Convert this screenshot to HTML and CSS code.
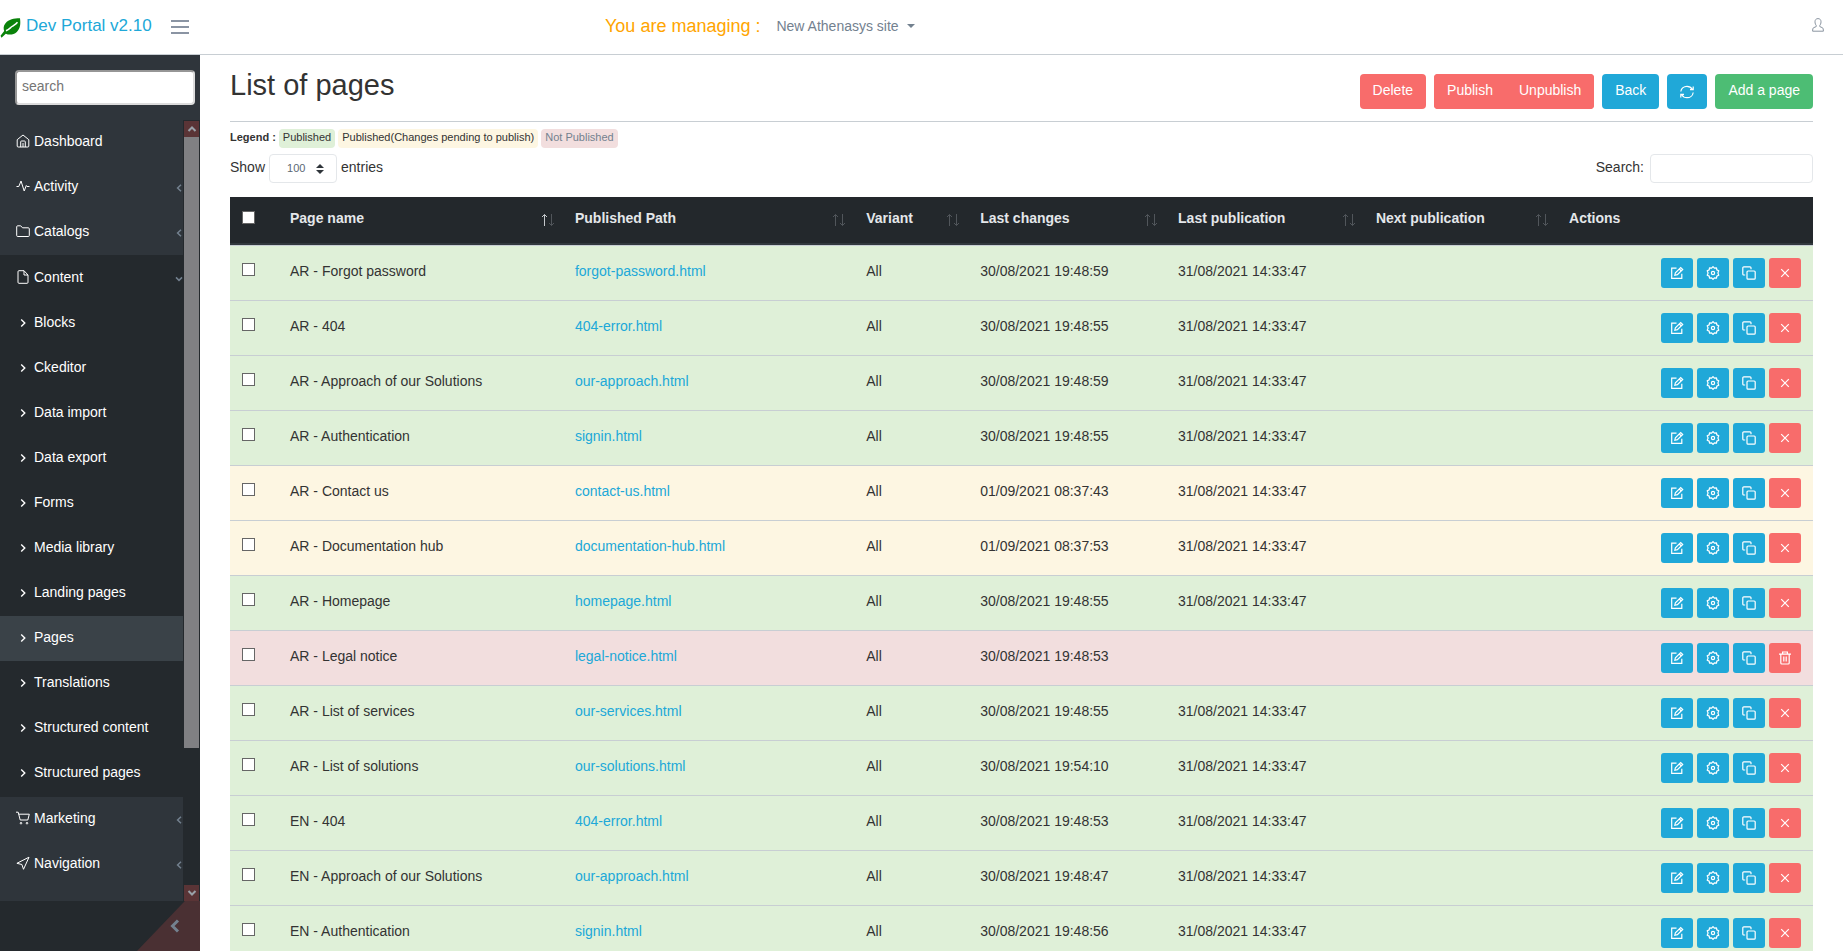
FILE: index.html
```html
<!DOCTYPE html>
<html lang="en">
<head>
<meta charset="utf-8">
<title>Dev Portal - List of pages</title>
<link rel="stylesheet" href="styles.css">
</head>
<body>
<svg class="sprite" aria-hidden="true">
  <symbol id="edit" viewBox="0 0 14 14"><path d="M6.5 2.200H1.700v10.100h10.100V7.800M4.800 9.300l.6-2.600 5.300-5.200 2 2-5.300 5.200zM9.300 3l2 2"/></symbol>
  <symbol id="gear" viewBox="0 0 14 14"><path d="M5.600 2.200 7 .6l1.400 1.600 2.100-.4.300 2.100 2 .9L11.900 7l.9 2.200-2 .9-.3 2.100-2.100-.4L7 13.400l-1.400-1.600-2.100.4-.3-2.100-2-.9L2.100 7l-.9-2.200 2-.9.300-2.100z" stroke-linejoin="round"/><circle cx="7" cy="7" r="1.600"/></symbol>
  <symbol id="copy" viewBox="0 0 14 14"><rect x="5" y="5" width="8.200" height="8.200" rx="1"/><path d="M3.200 9H1.800a1 1 0 0 1-1-1V1.800a1 1 0 0 1 1-1H8a1 1 0 0 1 1 1v1.400"/></symbol>
  <symbol id="cross" viewBox="0 0 14 14"><path d="m3.200 3.200 7.600 7.600m0-7.600-7.600 7.600"/></symbol>
  <symbol id="trash" viewBox="0 0 14 14"><path d="M1 3.200h12M4.600 3V1h4.800v2M2.800 3.400v8.600q0 1 1 1h6.400q1 0 1-1V3.400M5.800 5.500v5M8.200 5.500v5"/></symbol>
  <symbol id="left" viewBox="0 0 8 10"><path d="M6 1.800 2.600 5 6 8.200"/></symbol>
  <symbol id="right" viewBox="0 0 8 10"><path d="M2.200 1.400 5.800 5 2.200 8.600"/></symbol>
  <symbol id="down" viewBox="0 0 8 8"><path d="M1 2.400 4 5.400l3-3"/></symbol>
  <symbol id="sort" viewBox="0 0 14 14"><path class="up" d="M3.500 13V1.500M1 4l2.500-2.500L6 4"/><path class="dn" d="M10.500 1v11.500M8 10l2.500 2.500L13 10"/></symbol>
</svg>

<header class="topbar">
  <a class="brand" href="#">
    <svg class="leaf" viewBox="0 0 20 20"><path d="M19.500.3C13 .5 8.500 1.300 5 5.200 2.700 8 2.900 10.700 3.700 13L0 17.800l1 1.900 4.300-4c3.200 1.500 7.800 1.200 11-1.700C20 10.500 20.200 5.500 19.500.3z" fill="#0a820a"/><path d="M5.500 12.700c3-1.200 4-2.700 6-4.200s3.500-2 5.500-4.300" fill="none" stroke="#fff" stroke-width="1.500"/></svg>
    <span>Dev Portal v2.10</span>
  </a>
  <button class="burger" aria-label="Toggle menu"><span></span><span></span><span></span></button>
  <div class="site">
    <span class="managing">You are managing :</span>
    <button class="site-pick">New Athenasys site <span class="caret"></span></button>
  </div>
  <button class="user" aria-label="Account"><svg viewBox="0 0 12 14"><path d="M6 .6c2 0 3 1.300 3 3.200 0 1.700-.6 2.900-1.200 3.600v1.200l2.800 1.200q.8.500.8 3.400H.6q0-2.900.8-3.400l2.800-1.200V7.400C3.600 6.700 3 5.500 3 3.800 3 1.900 4 .6 6 .6z"/></svg></button>
</header>

<div class="shell">
  <aside class="sidebar">
    <div class="side-search"><input type="text" placeholder="search" aria-label="Search menu"></div>
    <div class="side-body">
      <nav class="menu">
        <a class="item" href="#"><svg class="ico" viewBox="0 0 14 14"><path d="M1.200 5.700 7 1l5.800 4.700V12q0 1-1 1H2.200q-1 0-1-1zM4.700 13V7.800q0-.8.800-.8h3q.8 0 .8.800V13M7 13V9"/></svg>Dashboard</a>
        <a class="item" href="#"><svg class="ico" viewBox="0 0 14 14"><path d="M.5 7.500h2.300L5 2l3.200 10 2.100-5.500.7 1h2.500"/></svg>Activity<svg class="arrow"><use href="#left"/></svg></a>
        <a class="item" href="#"><svg class="ico" viewBox="0 0 14 14"><path d="M.7 2.800q0-1 1-1h3l1.800 2h5.800q1 0 1 1v6.700q0 1-1 1H1.700q-1 0-1-1z"/></svg>Catalogs<svg class="arrow"><use href="#left"/></svg></a>
        <div class="open">
          <a class="item" href="#"><svg class="ico" viewBox="0 0 14 14"><path d="M2 1.700q0-1 1-1h5L12 5v7.300q0 1-1 1H3q-1 0-1-1zM8 .8V5h4"/></svg>Content<svg class="arrow"><use href="#down"/></svg></a>
          <a class="item" href="#"><svg class="ico sub"><use href="#right"/></svg>Blocks</a>
          <a class="item" href="#"><svg class="ico sub"><use href="#right"/></svg>Ckeditor</a>
          <a class="item" href="#"><svg class="ico sub"><use href="#right"/></svg>Data import</a>
          <a class="item" href="#"><svg class="ico sub"><use href="#right"/></svg>Data export</a>
          <a class="item" href="#"><svg class="ico sub"><use href="#right"/></svg>Forms</a>
          <a class="item" href="#"><svg class="ico sub"><use href="#right"/></svg>Media library</a>
          <a class="item" href="#"><svg class="ico sub"><use href="#right"/></svg>Landing pages</a>
          <a class="item active" href="#"><svg class="ico sub"><use href="#right"/></svg>Pages</a>
          <a class="item" href="#"><svg class="ico sub"><use href="#right"/></svg>Translations</a>
          <a class="item" href="#"><svg class="ico sub"><use href="#right"/></svg>Structured content</a>
          <a class="item" href="#"><svg class="ico sub"><use href="#right"/></svg>Structured pages</a>
        </div>
        <a class="item" href="#"><svg class="ico" viewBox="0 0 14 14"><path d="M0 1.200h2.200l2 7.800h7.600l1.500-5.800H2.800"/><circle cx="5" cy="12.200" r=".8"/><circle cx="11" cy="12.200" r=".8"/></svg>Marketing<svg class="arrow"><use href="#left"/></svg></a>
        <a class="item" href="#"><svg class="ico" viewBox="0 0 14 14"><path d="M13 1.200.9 7.300l5 1.200 1.600 4.800z"/></svg>Navigation<svg class="arrow"><use href="#left"/></svg></a>
      </nav>
      <div class="scroll">
        <span class="scroll-btn"><svg viewBox="0 0 10 8"><path d="M1.500 6 5 2.500 8.500 6"/></svg></span>
        <span class="thumb"></span>
        <span class="scroll-btn"><svg viewBox="0 0 10 8"><path d="M1.500 2 5 5.500 8.500 2"/></svg></span>
      </div>
    </div>
    <button class="minimizer" aria-label="Collapse sidebar"><svg viewBox="0 0 10 14"><path d="M8 1.500 2.500 7 8 12.500"/></svg></button>
  </aside>

  <main class="main">
    <div class="title-row">
      <h1>List of pages</h1>
      <div class="tools">
        <button class="btn red">Delete</button>
        <div class="group"><button class="btn red">Publish</button><button class="btn red">Unpublish</button></div>
        <button class="btn blue">Back</button>
        <button class="btn blue" aria-label="Refresh"><svg class="refresh" viewBox="0 0 14 14"><path d="M.8 6.500C1.200 3.300 4 1.300 7 1.300c2.300 0 4.200 1.200 5.200 3M13.200 1.500v3.200H10M13.200 7.500c-.4 3.200-3.200 5.200-6.200 5.200-2.300 0-4.200-1.200-5.200-3M.8 12.500V9.300H4"/></svg></button>
        <button class="btn green">Add a page</button>
      </div>
    </div>
    <div class="legend"><b>Legend :</b><span class="chip ok">Published</span><span class="chip pending">Published(Changes pending to publish)</span><span class="chip off">Not Published</span></div>
    <div class="controls">
      <div class="length"><label for="len">Show</label><span class="pick"><select id="len"><option>100</option></select><svg viewBox="0 0 8 10"><path d="M4 0l4 4H0zM4 10l4-4H0z"/></svg></span><span>entries</span></div>
      <div class="find"><label for="find">Search:</label><input type="search" id="find"></div>
    </div>
    <table>
      <colgroup><col class="c-check"><col class="c-name"><col class="c-path"><col class="c-variant"><col class="c-date"><col class="c-date"><col class="c-next"><col></colgroup>
      <thead><tr>
        <th><input type="checkbox" aria-label="Select all"></th>
        <th><div class="th asc">Page name<svg><use href="#sort"/></svg></div></th>
        <th><div class="th">Published Path<svg><use href="#sort"/></svg></div></th>
        <th><div class="th">Variant<svg><use href="#sort"/></svg></div></th>
        <th><div class="th">Last changes<svg><use href="#sort"/></svg></div></th>
        <th><div class="th">Last publication<svg><use href="#sort"/></svg></div></th>
        <th><div class="th">Next publication<svg><use href="#sort"/></svg></div></th>
        <th><div class="th">Actions</div></th>
      </tr></thead>
      <tbody>
        <tr class="ok"><td><input type="checkbox" aria-label="Select"></td><td>AR - Forgot password</td><td><a href="#">forgot-password.html</a></td><td>All</td><td>30/08/2021 19:48:59</td><td>31/08/2021 14:33:47</td><td></td><td><div class="acts"><button aria-label="Edit"><svg><use href="#edit"/></svg></button><button aria-label="Settings"><svg><use href="#gear"/></svg></button><button aria-label="Copy"><svg><use href="#copy"/></svg></button><button class="red" aria-label="Unpublish"><svg><use href="#cross"/></svg></button></div></td></tr>
        <tr class="ok"><td><input type="checkbox" aria-label="Select"></td><td>AR - 404</td><td><a href="#">404-error.html</a></td><td>All</td><td>30/08/2021 19:48:55</td><td>31/08/2021 14:33:47</td><td></td><td><div class="acts"><button aria-label="Edit"><svg><use href="#edit"/></svg></button><button aria-label="Settings"><svg><use href="#gear"/></svg></button><button aria-label="Copy"><svg><use href="#copy"/></svg></button><button class="red" aria-label="Unpublish"><svg><use href="#cross"/></svg></button></div></td></tr>
        <tr class="ok"><td><input type="checkbox" aria-label="Select"></td><td>AR - Approach of our Solutions</td><td><a href="#">our-approach.html</a></td><td>All</td><td>30/08/2021 19:48:59</td><td>31/08/2021 14:33:47</td><td></td><td><div class="acts"><button aria-label="Edit"><svg><use href="#edit"/></svg></button><button aria-label="Settings"><svg><use href="#gear"/></svg></button><button aria-label="Copy"><svg><use href="#copy"/></svg></button><button class="red" aria-label="Unpublish"><svg><use href="#cross"/></svg></button></div></td></tr>
        <tr class="ok"><td><input type="checkbox" aria-label="Select"></td><td>AR - Authentication</td><td><a href="#">signin.html</a></td><td>All</td><td>30/08/2021 19:48:55</td><td>31/08/2021 14:33:47</td><td></td><td><div class="acts"><button aria-label="Edit"><svg><use href="#edit"/></svg></button><button aria-label="Settings"><svg><use href="#gear"/></svg></button><button aria-label="Copy"><svg><use href="#copy"/></svg></button><button class="red" aria-label="Unpublish"><svg><use href="#cross"/></svg></button></div></td></tr>
        <tr class="pending"><td><input type="checkbox" aria-label="Select"></td><td>AR - Contact us</td><td><a href="#">contact-us.html</a></td><td>All</td><td>01/09/2021 08:37:43</td><td>31/08/2021 14:33:47</td><td></td><td><div class="acts"><button aria-label="Edit"><svg><use href="#edit"/></svg></button><button aria-label="Settings"><svg><use href="#gear"/></svg></button><button aria-label="Copy"><svg><use href="#copy"/></svg></button><button class="red" aria-label="Unpublish"><svg><use href="#cross"/></svg></button></div></td></tr>
        <tr class="pending"><td><input type="checkbox" aria-label="Select"></td><td>AR - Documentation hub</td><td><a href="#">documentation-hub.html</a></td><td>All</td><td>01/09/2021 08:37:53</td><td>31/08/2021 14:33:47</td><td></td><td><div class="acts"><button aria-label="Edit"><svg><use href="#edit"/></svg></button><button aria-label="Settings"><svg><use href="#gear"/></svg></button><button aria-label="Copy"><svg><use href="#copy"/></svg></button><button class="red" aria-label="Unpublish"><svg><use href="#cross"/></svg></button></div></td></tr>
        <tr class="ok"><td><input type="checkbox" aria-label="Select"></td><td>AR - Homepage</td><td><a href="#">homepage.html</a></td><td>All</td><td>30/08/2021 19:48:55</td><td>31/08/2021 14:33:47</td><td></td><td><div class="acts"><button aria-label="Edit"><svg><use href="#edit"/></svg></button><button aria-label="Settings"><svg><use href="#gear"/></svg></button><button aria-label="Copy"><svg><use href="#copy"/></svg></button><button class="red" aria-label="Unpublish"><svg><use href="#cross"/></svg></button></div></td></tr>
        <tr class="off"><td><input type="checkbox" aria-label="Select"></td><td>AR - Legal notice</td><td><a href="#">legal-notice.html</a></td><td>All</td><td>30/08/2021 19:48:53</td><td></td><td></td><td><div class="acts"><button aria-label="Edit"><svg><use href="#edit"/></svg></button><button aria-label="Settings"><svg><use href="#gear"/></svg></button><button aria-label="Copy"><svg><use href="#copy"/></svg></button><button class="red" aria-label="Delete"><svg><use href="#trash"/></svg></button></div></td></tr>
        <tr class="ok"><td><input type="checkbox" aria-label="Select"></td><td>AR - List of services</td><td><a href="#">our-services.html</a></td><td>All</td><td>30/08/2021 19:48:55</td><td>31/08/2021 14:33:47</td><td></td><td><div class="acts"><button aria-label="Edit"><svg><use href="#edit"/></svg></button><button aria-label="Settings"><svg><use href="#gear"/></svg></button><button aria-label="Copy"><svg><use href="#copy"/></svg></button><button class="red" aria-label="Unpublish"><svg><use href="#cross"/></svg></button></div></td></tr>
        <tr class="ok"><td><input type="checkbox" aria-label="Select"></td><td>AR - List of solutions</td><td><a href="#">our-solutions.html</a></td><td>All</td><td>30/08/2021 19:54:10</td><td>31/08/2021 14:33:47</td><td></td><td><div class="acts"><button aria-label="Edit"><svg><use href="#edit"/></svg></button><button aria-label="Settings"><svg><use href="#gear"/></svg></button><button aria-label="Copy"><svg><use href="#copy"/></svg></button><button class="red" aria-label="Unpublish"><svg><use href="#cross"/></svg></button></div></td></tr>
        <tr class="ok"><td><input type="checkbox" aria-label="Select"></td><td>EN - 404</td><td><a href="#">404-error.html</a></td><td>All</td><td>30/08/2021 19:48:53</td><td>31/08/2021 14:33:47</td><td></td><td><div class="acts"><button aria-label="Edit"><svg><use href="#edit"/></svg></button><button aria-label="Settings"><svg><use href="#gear"/></svg></button><button aria-label="Copy"><svg><use href="#copy"/></svg></button><button class="red" aria-label="Unpublish"><svg><use href="#cross"/></svg></button></div></td></tr>
        <tr class="ok"><td><input type="checkbox" aria-label="Select"></td><td>EN - Approach of our Solutions</td><td><a href="#">our-approach.html</a></td><td>All</td><td>30/08/2021 19:48:47</td><td>31/08/2021 14:33:47</td><td></td><td><div class="acts"><button aria-label="Edit"><svg><use href="#edit"/></svg></button><button aria-label="Settings"><svg><use href="#gear"/></svg></button><button aria-label="Copy"><svg><use href="#copy"/></svg></button><button class="red" aria-label="Unpublish"><svg><use href="#cross"/></svg></button></div></td></tr>
        <tr class="ok"><td><input type="checkbox" aria-label="Select"></td><td>EN - Authentication</td><td><a href="#">signin.html</a></td><td>All</td><td>30/08/2021 19:48:56</td><td>31/08/2021 14:33:47</td><td></td><td><div class="acts"><button aria-label="Edit"><svg><use href="#edit"/></svg></button><button aria-label="Settings"><svg><use href="#gear"/></svg></button><button aria-label="Copy"><svg><use href="#copy"/></svg></button><button class="red" aria-label="Unpublish"><svg><use href="#cross"/></svg></button></div></td></tr>
      </tbody>
    </table>
  </main>
</div>
</body>
</html>
```
FILE: styles.css
```css
* { box-sizing: border-box; }
body {
  margin: 0;
  height: 100vh;
  display: flex;
  flex-direction: column;
  overflow: hidden;
  background: #fff;
  color: #333;
  font: 14px/20px "Liberation Sans", Arial, sans-serif;
}
button, input, select { font: inherit; color: inherit; margin: 0; }
button { border: 0; background: none; padding: 0; cursor: pointer; }
a { color: #20a8d8; text-decoration: none; }
svg { fill: none; stroke: currentColor; }
.sprite { display: none; }

/* top bar */
.topbar {
  flex: none;
  display: grid;
  grid-template-columns: auto auto 1fr auto;
  align-items: center;
  height: 55px;
  border-bottom: 1px solid #c8ced3;
  padding-right: 19px;
}
.brand { display: flex; align-items: center; gap: 5px; width: 155px; font-size: 17px; line-height: 50px; padding-bottom: 2px; white-space: nowrap; }
.leaf { width: 21px; height: 20px; margin-top: 4px; flex: none; stroke: none; }
.burger { display: grid; gap: 4px; width: 18px; margin-left: 16px; }
.burger span { height: 2px; background: #8a94a3; }
.site { display: flex; align-items: center; gap: 16px; padding: 0 0 3px 416px; white-space: nowrap; }
.managing { color: orange; font-size: 18px; }
.site-pick { display: flex; align-items: center; gap: 8px; color: #73818f; }
.caret { border: 4px solid transparent; border-top-color: #73818f; border-bottom: 0; }
.user { color: #8a94a0; padding-bottom: 4px; }
.user svg { width: 12px; height: 14px; display: block; }

.shell { flex: 1; min-height: 0; display: flex; }

/* sidebar */
.sidebar { position: relative; flex: none; width: 200px; display: flex; flex-direction: column; background: #24292d; color: #fff; }
.side-search { background: #2f353b; padding: 15px 5px 15px 15px; }
.side-search input {
  display: block;
  width: 100%;
  height: 35px;
  padding: 0 5px 3px;
  border: 2px solid #dcdcdc;
  border-color: #969696 #dcdcdc #dcdcdc #969696;
  border-radius: 4px;
  background: #fff;
  color: #555;
}
.side-search input::placeholder { color: #757575; opacity: 1; }
.side-body { flex: 1; min-height: 0; display: flex; margin-bottom: 50px; background: #2f353b; }
.menu { flex: 1; min-width: 0; }
.item { display: flex; align-items: center; height: 45px; padding: 0 0 3px 16px; color: #fff; }
.open { background: #24292d; padding: 1px 0; }
.active { background: #3a4248; }
.ico { width: 14px; height: 14px; margin-right: 4px; flex: none; }
.ico.sub { width: 8px; height: 10px; margin: 2px 7px 0 3px; stroke-width: 1.4; }
.arrow { width: 8px; height: 10px; margin: 3px 0 0 auto; color: #73818f; stroke-width: 1.5; }
.scroll { width: 17px; display: flex; flex-direction: column; padding: 1px 1px 0 1px; background: #24292d; }
.scroll-btn { display: flex; justify-content: center; align-items: center; height: 16px; background: #5a3436; color: #99a1a8; }
.scroll-btn svg { width: 10px; height: 8px; stroke-width: 2; }
.thumb { flex: none; height: 78.3%; margin-bottom: auto; background: #808083; }
.minimizer {
  position: absolute;
  right: 0;
  bottom: 0;
  width: 63px;
  height: 50px;
  display: flex;
  justify-content: flex-end;
  align-items: center;
  padding-right: 20px;
  background: #4a3033;
  clip-path: polygon(100% 0, 76% 0, 0 100%, 100% 100%);
  color: #73818f;
}
.minimizer svg { width: 10px; height: 14px; stroke-width: 3; }

/* content */
.main { flex: 1; min-width: 0; padding: 0 30px; overflow: hidden; }
.title-row { display: flex; justify-content: space-between; align-items: flex-start; padding: 19px 0 12px; border-bottom: 1px solid #c8ced3; }
h1 { margin: 0; font-size: 29px; line-height: 22px; font-weight: 500; }
.tools { display: flex; gap: 8px; }
.btn { height: 35px; padding: 0 13px 4px; border-radius: 4px; color: #fff; white-space: nowrap; }
.red { background: #f86c6b; }
.blue { background: #20a8d8; }
.green { background: #4dbd74; }
.group { display: flex; border-radius: 4px; overflow: hidden; background: #f86c6b; }
.group .btn { border-radius: 0; }
.refresh { display: block; width: 14px; height: 14px; margin-top: 4px; stroke-width: 1.2; }
.legend { display: flex; align-items: center; gap: 3px; padding: 7px 0 6px; font-size: 11px; line-height: 16px; }
.chip { padding: 0 4px 3px; border-radius: 4px; }
.legend b { padding-bottom: 3px; }
.ok { background: #dff0d8; }
.pending { background: #fdf6e2; }
.off { background: #f2dede; }
.chip.off { color: #73818f; }
.controls { display: flex; justify-content: space-between; }
.length, .find { display: flex; gap: 4px; line-height: 26px; }
.find { gap: 6px; }
.pick { position: relative; width: 68px; height: 29px; }
.pick select { width: 100%; height: 100%; appearance: none; border: 1px solid #e4e7ea; border-radius: 4px; background: #fff; padding: 0 0 3px 17px; font-size: 11px; color: #5c6873; }
.pick svg { position: absolute; right: 13px; top: 10px; width: 8px; height: 10px; fill: #2f353a; stroke: none; pointer-events: none; }
.find input { width: 163px; height: 29px; border: 1px solid #e4e7ea; border-radius: 4px; background: #fff; }

table { width: 100%; margin-top: 14px; table-layout: fixed; border-collapse: separate; border-spacing: 0; }
.c-check { width: 48px; }
.c-name { width: 18%; }
.c-path { width: 18.4%; }
.c-variant { width: 7.2%; }
.c-date { width: 12.5%; }
.c-next { width: 12.2%; }
th { height: 48px; padding: 0 8px 4px 12px; background: #23282c; color: #e4e7ea; text-align: left; border-bottom: 2px solid #32383e; white-space: nowrap; }
.th { display: flex; justify-content: space-between; align-items: center; }
.th svg { width: 14px; height: 14px; margin-top: 3px; color: #51565b; }
.up { stroke: var(--up, currentColor); }
.th.asc { --up: #c4c8cc; }
th input[type="checkbox"] { margin-bottom: 2px; }
td { height: 55px; padding: 0 12px 5px; border-top: 1px solid #c8ced3; white-space: nowrap; }
td:last-child { padding-bottom: 0; }
input[type="checkbox"] { display: block; appearance: none; width: 13px; height: 13px; border: 1px solid #666; background: #fff; }
td input[type="checkbox"] { margin-bottom: 2px; }
.acts { display: flex; justify-content: flex-end; gap: 4px; }
.acts button { width: 32px; height: 30px; display: flex; justify-content: center; align-items: center; border-radius: 3px; background: #20a8d8; color: #fff; }
.acts .red { background: #f86c6b; }
.acts svg { width: 14px; height: 14px; stroke-width: 1.2; }
```
